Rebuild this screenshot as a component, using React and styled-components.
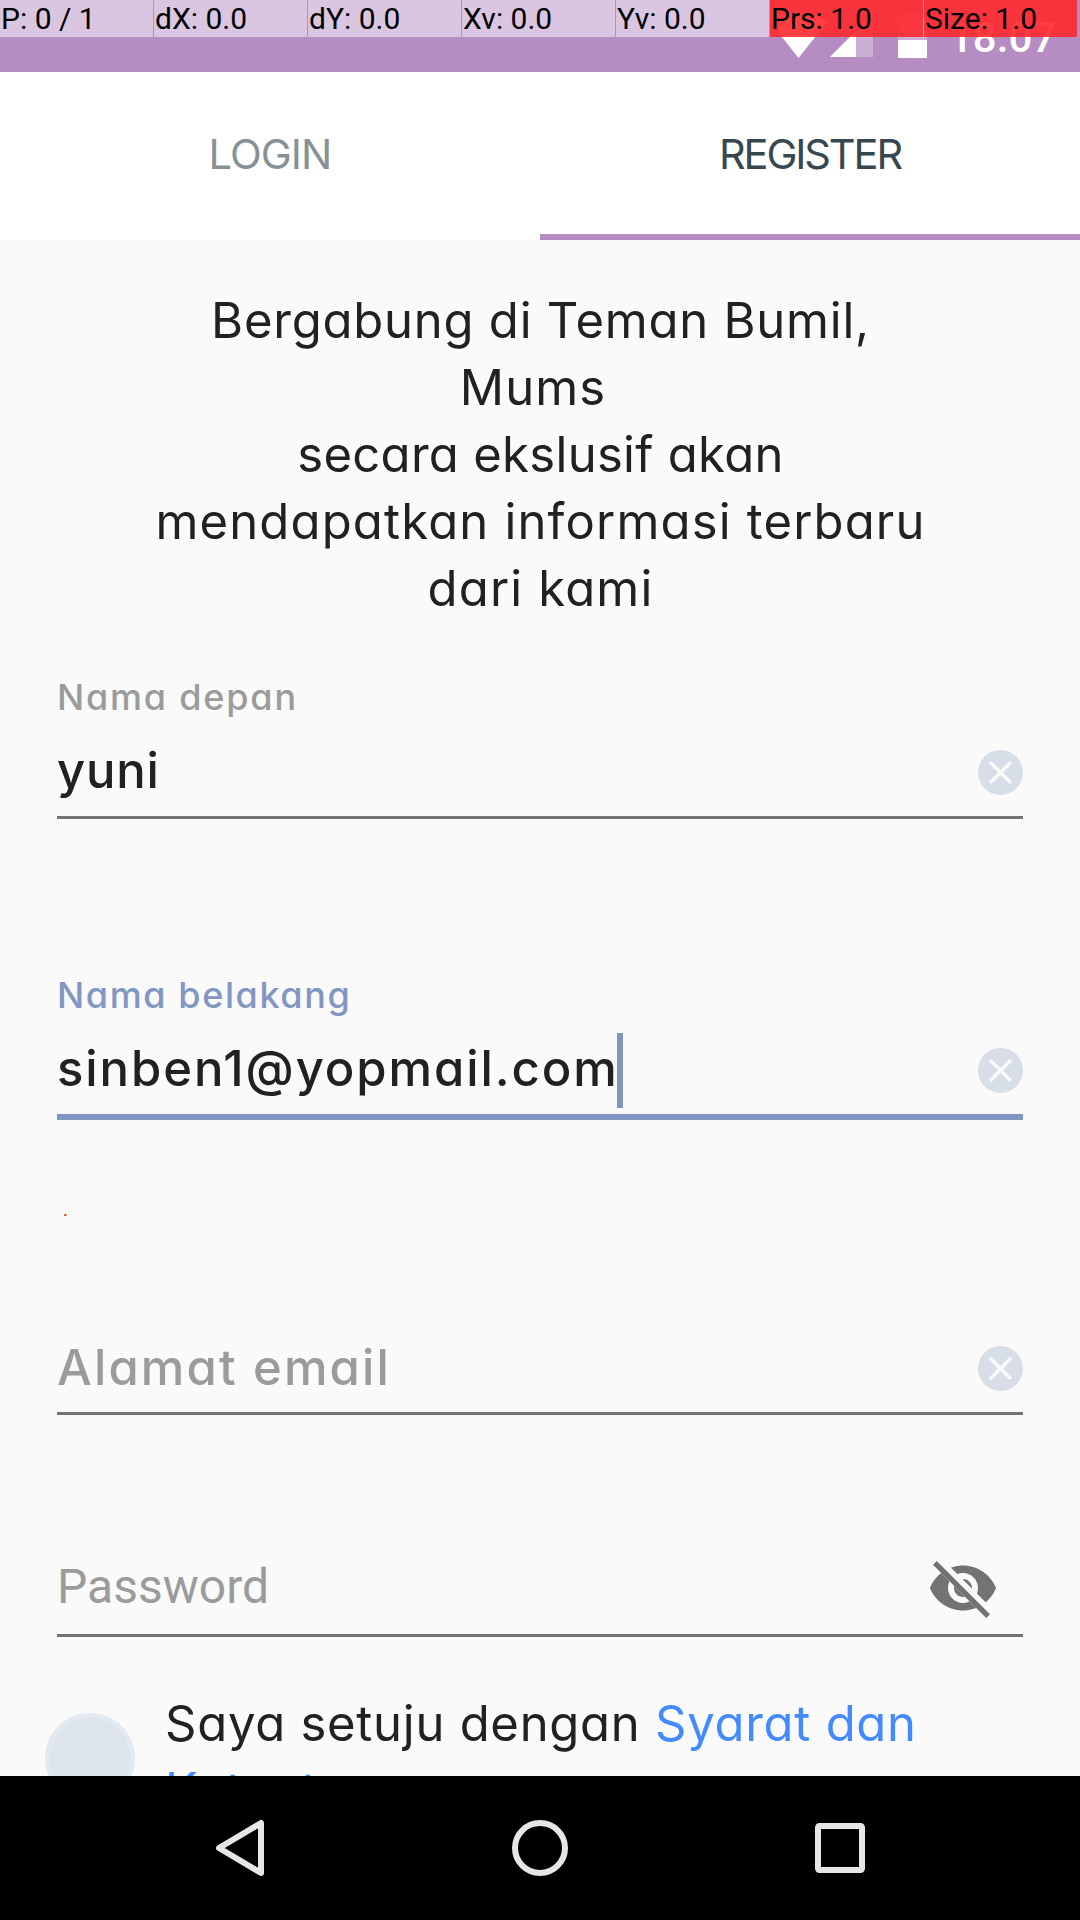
import React from 'react';
import styled, { createGlobalStyle } from 'styled-components';

const GlobalStyle = createGlobalStyle`
  * { box-sizing: border-box; }
  html, body { margin: 0; padding: 0; background: #fafafa; }
`;

const Screen = styled.div`
  position: relative;
  display: flex;
  flex-direction: column;
  width: 1080px;
  height: 1920px;
  overflow: hidden;
  background: #fafafa;
  color: #212121;
  font-family: Inter, 'Open Sans', sans-serif;
  font-feature-settings: 'cv11' 1;
`;

const StatusBar = styled.header`
  display: flex;
  justify-content: flex-end;
  flex: none;
  height: 72px;
  padding-right: 25px;
  background: #b58dc2;
`;

const StatusIcons = styled.svg`
  width: 170px;
  height: 72px;
`;

const Clock = styled.span`
  width: 106px;
  color: #fff;
  font: 500 42px/76px Roboto, sans-serif;
  white-space: nowrap;
`;

const PointerOverlay = styled.div`
  position: absolute;
  top: 0;
  left: 0;
  display: flex;
  gap: 1px;
`;

const PointerCell = styled.div`
  width: 153px;
  height: 37px;
  padding-left: 1px;
  background: ${p => (p.$alert ? 'rgba(255, 41, 45, 0.9)' : 'rgba(255, 255, 255, 0.5)')};
  color: #000;
  font: 400 30px/37px Roboto, sans-serif;
  white-space: nowrap;
`;

const Tabs = styled.nav`
  display: flex;
  flex: none;
  height: 168px;
  background: #fff;
`;

const Tab = styled.div`
  display: flex;
  flex: 1;
  align-items: center;
  justify-content: center;
  padding-top: 2px;
  border-bottom: 6px solid ${p => (p.$active ? '#b58dc2' : '#fff')};
  color: ${p => (p.$active ? '#37474f' : '#879195')};
  font-size: 41.5px;
  letter-spacing: ${p => p.$track}px;
`;

const Content = styled.main`
  flex: 1;
  min-height: 0;
  overflow: hidden;
  padding: 47px 57px 0;
`;

const Intro = styled.div`
  display: flex;
  flex-direction: column;
  align-items: center;
  padding-left: 1px;
  font-size: 49px;
  line-height: 67px;
  white-space: pre;
`;

const IntroLine = styled.span`
  letter-spacing: ${p => p.$track}px;
`;

const Field = styled.div`
  margin-top: ${p => p.$gap}px;
`;

const Label = styled.div`
  height: 48px;
  color: ${p => (p.$focused ? '#8296c4' : '#9b9b9b')};
  font-size: 36px;
  font-weight: 500;
  line-height: 48px;
  letter-spacing: ${p => p.$track || 0}px;
`;

const InputRow = styled.div`
  display: flex;
  align-items: center;
  justify-content: space-between;
  height: ${p => (p.$focused ? 101 : 98)}px;
  padding-top: 8px;
  border-bottom: ${p => (p.$focused ? '6px solid #8296c4' : '3px solid #737373')};
`;

const Value = styled.div`
  display: flex;
  align-items: center;
  height: 75px;
  padding-bottom: ${p => (p.$hint ? 3 : 5)}px;
  color: ${p => (p.$hint ? '#9b9b9b' : '#212121')};
  font-size: 49px;
  font-weight: 500;
  letter-spacing: ${p => p.$track}px;
`;

const PasswordRow = styled(InputRow)`
  padding: 3px 24px 0 0;
`;

const PasswordHint = styled.div`
  margin-top: -4px;
  color: #9b9b9b;
  font: 400 48px/75px Roboto, sans-serif;
`;

const Caret = styled.span`
  width: 6px;
  height: 75px;
  margin: 5px 0 0 -2px;
  background: #8296c4;
  flex: none;
`;

const ErrorNote = styled.div`
  height: 152px;
  padding: 80px 0 0 6px;
  color: #f00;
  font: 400 18px/20px Roboto, sans-serif;
`;

const ClearSvg = styled.svg`
  width: 45px;
  height: 45px;
`;

const EyeSvg = styled.svg`
  width: 72px;
  height: 72px;
`;

const Terms = styled.div`
  display: flex;
  align-items: flex-start;
  gap: 30px;
  margin: 53px 0 0 -12px;
`;

const CheckCircle = styled.span`
  flex: none;
  width: 90px;
  height: 90px;
  margin-top: 23px;
  border: 5px solid #e3e9f0;
  border-radius: 50%;
  background: #dde4ec;
`;

const TermsText = styled.p`
  margin: 0;
  font-size: 49px;
  line-height: 67px;
  letter-spacing: ${p => p.$track}px;
`;

const TermsLink = styled.a`
  color: #448aff;
`;

const NavBar = styled.footer`
  display: flex;
  align-items: center;
  justify-content: center;
  gap: 228px;
  flex: none;
  height: 144px;
  background: #000;
`;

const NavIcon = styled.svg`
  width: 72px;
  height: 72px;
  fill: none;
  stroke: #e6e6e6;
  stroke-width: 6;
  stroke-linejoin: round;
`;

function ClearIcon() {
  return (
    <ClearSvg viewBox="0 0 45 45">
      <circle cx="22.5" cy="22.5" r="22.5" fill="#d7dee7" />
      <path d="M12 12 33 33M33 12 12 33" stroke="#fafafa" strokeWidth="3.6" fill="none" />
    </ClearSvg>
  );
}

function EyeOffIcon() {
  return (
    <EyeSvg viewBox="0 0 24 24">
      <clipPath id="eye-cut">
        <path d="M2 4.27 19.73 22 22.27 19.46 4.54 1.73V1H23V23H1V4.27Z" />
      </clipPath>
      <path
        clipPath="url(#eye-cut)"
        fill="#737373"
        d="M12 4.5C7 4.5 2.73 7.61 1 12c1.73 4.39 6 7.5 11 7.5s9.27-3.11 11-7.5c-1.73-4.39-6-7.5-11-7.5zM12 17c-2.76 0-5-2.24-5-5s2.24-5 5-5 5 2.24 5 5-2.24 5-5 5zM12 9c-1.66 0-3 1.34-3 3s1.34 3 3 3 3-1.34 3-3-1.34-3-3-3z"
      />
      <path d="M3.27 4.27 19.74 20.74" stroke="#737373" strokeWidth="1.8" strokeLinecap="square" />
    </EyeSvg>
  );
}

const pointerCells = [
  { text: 'P: 0 / 1' },
  { text: 'dX: 0.0' },
  { text: 'dY: 0.0' },
  { text: 'Xv: 0.0' },
  { text: 'Yv: 0.0' },
  { text: 'Prs: 1.0', alert: true },
  { text: 'Size: 1.0', alert: true },
];

const introLines = [
  ['Bergabung di Teman Bumil,', 0.77],
  ['Mums ', 1.1],
  ['secara ekslusif akan', 0.3],
  ['mendapatkan informasi terbaru', 1.17],
  ['dari kami', 1.15],
];

export default function App() {
  return (
    <Screen>
      <GlobalStyle />
      <StatusBar>
        <StatusIcons viewBox="779 0 170 72">
          <path d="M770 22Q798 2 827 22L798.5 58Z" fill="#fff" />
          <path d="M830 57 873 14V57Z" fill="#fff" opacity="0.3" />
          <path d="M830 57 856 31V57Z" fill="#fff" />
          <path d="M898 18H904V14H921V18H927V58H898Z" fill="#fff" opacity="0.3" />
          <path d="M898 40H927V58H898Z" fill="#fff" />
        </StatusIcons>
        <Clock>18.07</Clock>
      </StatusBar>

      <Tabs>
        <Tab $track={-0.9}>LOGIN</Tab>
        <Tab $active $track={-2.1}>REGISTER</Tab>
      </Tabs>

      <Content>
        <Intro>
          {introLines.map(([text, track]) => (
            <IntroLine key={text} $track={track}>{text}</IntroLine>
          ))}
        </Intro>

        <Field $gap={51}>
          <Label $track={1.8}>Nama depan</Label>
          <InputRow>
            <Value $track={0.8}>yuni</Value>
            <ClearIcon />
          </InputRow>
        </Field>

        <Field $gap={152}>
          <Label $focused $track={1.6}>Nama belakang</Label>
          <InputRow $focused>
            <Value $track={1.92}>sinben1@yopmail.com<Caret /></Value>
            <ClearIcon />
          </InputRow>
        </Field>

        <ErrorNote>.</ErrorNote>

        <Field $gap={-3}>
          <Label />
          <InputRow>
            <Value $hint $track={2.15}>Alamat email</Value>
            <ClearIcon />
          </InputRow>
        </Field>

        <Field $gap={124}>
          <PasswordRow>
            <PasswordHint>Password</PasswordHint>
            <EyeOffIcon />
          </PasswordRow>
        </Field>

        <Terms>
          <CheckCircle />
          <TermsText $track={0.73}>
            Saya setuju dengan <TermsLink>Syarat dan<br />Ketentuan</TermsLink>
          </TermsText>
        </Terms>
      </Content>

      <NavBar>
        <NavIcon viewBox="204 1812 72 72"><path d="M219 1848 261 1823V1873Z" /></NavIcon>
        <NavIcon viewBox="504 1812 72 72"><circle cx="540" cy="1848" r="25" /></NavIcon>
        <NavIcon viewBox="804 1812 72 72"><rect x="818" y="1826" width="44" height="44" rx="1.5" /></NavIcon>
      </NavBar>

      <PointerOverlay>
        {pointerCells.map(c => (
          <PointerCell key={c.text} $alert={c.alert}>{c.text}</PointerCell>
        ))}
      </PointerOverlay>
    </Screen>
  );
}
